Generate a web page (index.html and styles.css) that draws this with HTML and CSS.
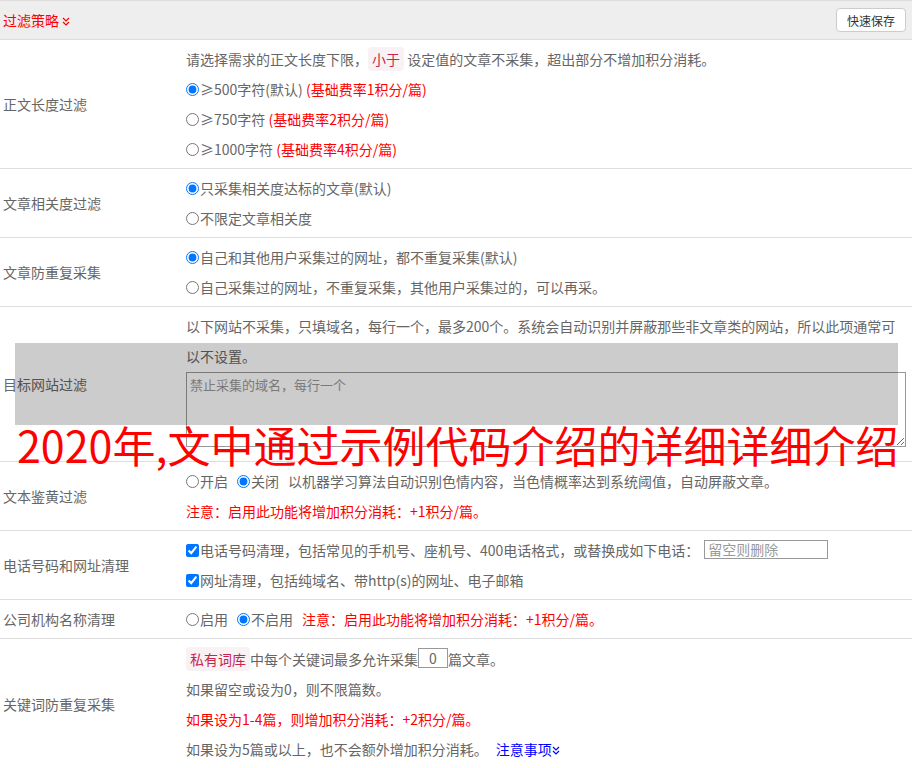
FILE: index.html
```html
<!DOCTYPE html>
<html lang="zh-CN">
<head>
    <meta charset="UTF-8">
    <meta name="viewport" content="width=device-width, initial-scale=1.0">
    <title>过滤策略</title>
    <link rel="stylesheet" href="styles.css">
</head>
<body>

    <div class="panel">
        <div class="panel-head">
            <span class="head-title">过滤策略
                <svg class="chev" width="8" height="9" viewBox="0 0 8 9"><polyline points="1,1 4,4 7,1"/><polyline points="1,5 4,8 7,5"/></svg>
            </span>
            <button class="btn-save">快速保存</button>
        </div>

        <div class="row">
            <div class="row-label">正文长度过滤</div>
            <div class="row-body">
                <p>请选择需求的正文长度下限，<code>小于</code> 设定值的文章不采集，超出部分不增加积分消耗。</p>
                <p><label><input type="radio" name="len" checked>≥500字符(默认)</label> <span class="red">(基础费率1积分/篇)</span></p>
                <p><label><input type="radio" name="len">≥750字符</label> <span class="red">(基础费率2积分/篇)</span></p>
                <p><label><input type="radio" name="len">≥1000字符</label> <span class="red">(基础费率4积分/篇)</span></p>
            </div>
        </div>

        <div class="row">
            <div class="row-label">文章相关度过滤</div>
            <div class="row-body">
                <p><label><input type="radio" name="rel" checked>只采集相关度达标的文章(默认)</label></p>
                <p><label><input type="radio" name="rel">不限定文章相关度</label></p>
            </div>
        </div>

        <div class="row">
            <div class="row-label">文章防重复采集</div>
            <div class="row-body">
                <p><label><input type="radio" name="dup" checked>自己和其他用户采集过的网址，都不重复采集(默认)</label></p>
                <p><label><input type="radio" name="dup">自己采集过的网址，不重复采集，其他用户采集过的，可以再采。</label></p>
            </div>
        </div>

        <div class="row">
            <div class="row-label">目标网站过滤</div>
            <div class="row-body">
                <p>以下网站不采集，只填域名，每行一个，最多200个。系统会自动识别并屏蔽那些非文章类的网站，所以此项通常可以不设置。</p>
                <textarea class="domains" placeholder="禁止采集的域名，每行一个"></textarea>
            </div>
        </div>

        <div class="row">
            <div class="row-label">文本鉴黄过滤</div>
            <div class="row-body">
                <p><label class="opt"><input type="radio" name="porn">开启</label><label class="opt"><input type="radio" name="porn" checked>关闭</label>以机器学习算法自动识别色情内容，当色情概率达到系统阈值，自动屏蔽文章。</p>
                <p class="red">注意：启用此功能将增加积分消耗：+1积分/篇。</p>
            </div>
        </div>

        <div class="row">
            <div class="row-label">电话号码和网址清理</div>
            <div class="row-body">
                <p><label><input type="checkbox" checked>电话号码清理，包括常见的手机号、座机号、400电话格式，或替换成如下电话：</label><input type="text" class="phone" placeholder="留空则删除"></p>
                <p><label><input type="checkbox" checked>网址清理，包括纯域名、带http(s)的网址、电子邮箱</label></p>
            </div>
        </div>

        <div class="row">
            <div class="row-label">公司机构名称清理</div>
            <div class="row-body">
                <p><label class="opt"><input type="radio" name="org">启用</label><label class="opt"><input type="radio" name="org" checked>不启用</label><span class="red">注意：启用此功能将增加积分消耗：+1积分/篇。</span></p>
            </div>
        </div>

        <div class="row">
            <div class="row-label">关键词防重复采集</div>
            <div class="row-body">
                <p><code>私有词库</code>中每个关键词最多允许采集<input type="text" class="num" value="0">篇文章。</p>
                <p>如果留空或设为0，则不限篇数。</p>
                <p class="red">如果设为1-4篇，则增加积分消耗：+2积分/篇。</p>
                <p>如果设为5篇或以上，也不会额外增加积分消耗。<a class="tip" href="#">注意事项<svg class="chev" width="8" height="9" viewBox="0 0 8 9"><polyline points="1,1 4,4 7,1"/><polyline points="1,5 4,8 7,5"/></svg></a></p>
            </div>
        </div>
    </div>

    <!-- 覆盖在页面上的水印 -->
    <div class="ad">
        <div class="ad-mask"></div>
        <div class="ad-text">2020年,文中通过示例代码介绍的详细详细介绍</div>
    </div>

</body>
</html>
```

FILE: styles.css
```css
body {
    margin: 0;
    font-family: "Noto Sans CJK SC", "Noto Sans", sans-serif;
    font-size: 14px;
    color: #666;
    background: #fff;
}

p {
    margin: 0;
    line-height: 30px;
}

.panel-head {
    display: flex;
    align-items: center;
    justify-content: space-between;
    height: 38px;
    padding: 0 6px 0 3px;
    background: #eee;
    border-top: 1px solid #ddd;
    border-bottom: 1px solid #ddd;
}

.head-title {
    color: #f00;
    font-size: 14px;
}

.chev {
    fill: none;
    stroke: currentColor;
    stroke-width: 1.2;
    vertical-align: 0;
}

.btn-save {
    height: 24px;
    width: 70px;
    padding: 0;
    font-family: inherit;
    font-size: 12px;
    color: #333;
    background: #fff;
    border: 1px solid #ccc;
    border-radius: 4px;
}

.row {
    display: grid;
    grid-template-columns: 186px 1fr;
    border-bottom: 1px solid #ddd;
}

.row-label {
    align-self: center;
    padding-left: 3px;
}

.row-body {
    padding: 4px 6px 4px 0;
}

.row:last-child .row-body {
    padding-top: 5px;
}

.red {
    color: #f00;
}

code {
    font-family: inherit;
    font-size: 14px;
    padding: 2px 4px;
    color: #c7254e;
    background: #f9f2f4;
    border-radius: 4px;
}

input[type="radio"],
input[type="checkbox"] {
    margin: 0 1px 0 0;
    width: 13px;
    height: 13px;
    vertical-align: -1px;
}

.opt {
    margin-right: 9px;
}

.domains {
    display: block;
    box-sizing: border-box;
    width: 720px;
    height: 75px;
    margin: 1px 0 10px;
    padding: 2px 3px;
    font-family: inherit;
    font-size: 13px;
    border: 1px solid #999;
    background: #fff;
}

.domains::placeholder,
.phone::placeholder {
    color: #999;
}

.phone {
    box-sizing: border-box;
    width: 124px;
    height: 19px;
    margin-left: 5px;
    padding: 0 3px;
    font-family: inherit;
    font-size: 14px;
    border: 1px solid #999;
    vertical-align: 1px;
}

.num {
    box-sizing: border-box;
    width: 30px;
    height: 20px;
    padding: 0;
    font-family: inherit;
    font-size: 14px;
    color: #666;
    text-align: center;
    border: 1px solid #999;
    vertical-align: 1px;
}

.tip {
    margin-left: 8px;
    color: #00f;
    text-decoration: none;
}

.ad {
    position: absolute;
    left: 15px;
    top: 343px;
    width: 883px;
}

.ad-mask {
    height: 82px;
    background: rgba(0, 0, 0, 0.2);
}

.ad-text {
    margin: -3px 0 0 2px;
    font-size: 43px;
    line-height: 44px;
    color: #f00;
    white-space: nowrap;
}
```
